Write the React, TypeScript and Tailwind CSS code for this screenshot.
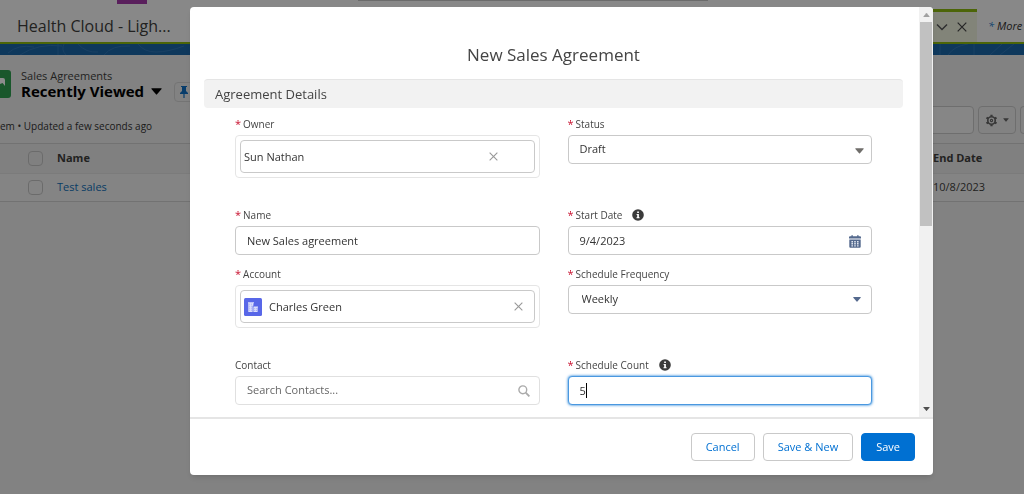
import { useState } from 'react';
import type { ReactNode } from 'react';

const inputClass =
  'h-[29px] w-full rounded border border-[#c9c9c9] bg-white pr-[11px] text-[11px] text-[#333] outline-none';

function Field({ id, label, required, info, children }: {
  id: string;
  label: string;
  required?: boolean;
  info?: boolean;
  children: ReactNode;
}) {
  return (
    <div>
      <div className="flex h-5 items-center pb-[2px] text-[10px] text-[#444]">
        {required && <span className="mr-[2px] text-[11px] text-[#c8102e]">*</span>}
        <label htmlFor={id}>{label}</label>
        {info && (
          <button type="button" aria-label={`Help for ${label}`} className="ml-[10px]">
            <InfoIcon />
          </button>
        )}
      </div>
      {children}
    </div>
  );
}

function Lookup({ id, value, icon, clearClass }: {
  id: string;
  value: string;
  icon?: ReactNode;
  clearClass: string;
}) {
  const [text, setText] = useState(value);

  return (
    <div className="mb-[18px] h-[43px] rounded border border-[#e5e5e5] p-1">
      <div className="flex h-full items-center rounded border border-[#c9c9c9] px-[3px]">
        {icon}
        <input
          id={id}
          value={text}
          onChange={(e) => setText(e.target.value)}
          className="min-w-0 flex-1 bg-transparent pt-[2px] text-[11px] text-[#333] outline-none"
        />
        <button type="button" aria-label="Clear" onClick={() => setText('')} className={clearClass}>
          <CloseIcon className="size-[9px] text-[#999]" />
        </button>
      </div>
    </div>
  );
}

function InfoIcon() {
  return (
    <svg viewBox="0 0 12 12" className="size-3">
      <circle cx="6" cy="6" r="5.8" fill="#3b3b3b" />
      <path d="M5.2 2.4h1.7v1.5H5.2zM4.6 5h2.3v3.2h.7v1H4.5v-1h.7V6h-.6z" fill="#fff" />
    </svg>
  );
}

function CloseIcon({ className }: { className: string }) {
  return (
    <svg viewBox="0 0 10 10" fill="none" stroke="currentColor" strokeWidth="1.2" className={className}>
      <path d="M.7.7l8.6 8.6M9.3.7L.7 9.3" />
    </svg>
  );
}

function Triangle({ className }: { className: string }) {
  return (
    <svg viewBox="0 0 10 6" fill="currentColor" className={className}>
      <path d="M.8 0h8.4q.8 0 .4.7L5.5 5.6q-.5.5-1 0L.4.7Q0 0 .8 0z" />
    </svg>
  );
}

function AccountIcon() {
  return (
    <svg viewBox="0 0 18 18" className="mr-[7px] size-[18px] shrink-0">
      <rect width="18" height="18" rx="1.5" fill="#5867e8" />
      <path d="M4 4.2h6v1h-.6v2.6H8.6V14H4.3V5.2H4z" fill="#dcdffc" />
      <path d="M9.4 8.6H14v1h-.4V14H9.4z" fill="#dcdffc" />
      <path d="M5.3 6.2h.8M7 6.2h.8M5.3 8.2h.8M7 8.2h.8M5.3 10.2h.8M7 10.2h.8M5.3 12.2h.8M7 12.2h.8M10.3 10.7h.9M12 10.7h.8M10.3 12.5h.9M12 12.5h.8" stroke="#8d97f0" strokeWidth=".8" />
    </svg>
  );
}

function CalendarIcon() {
  return (
    <svg viewBox="0 0 12 13" className="h-[13px] w-3">
      <path d="M1 1.3h1.4V.8Q2.4 0 3.1 0t.7.8v.5h4.4V.8Q8.2 0 8.9 0t.7.8v.5H11q1 0 1 1v1.3H0V2.3q0-1 1-1zM.3 4.5h11.4v7.3q0 1-1 1H1.3q-1 0-1-1z" fill="#54698d" />
      <path d="M2.4 6h1.6v1.4H2.4zM5.2 6h1.6v1.4H5.2zM8 6h1.6v1.4H8zM2.4 8.1h1.6v1.4H2.4zM5.2 8.1h1.6v1.4H5.2zM8 8.1h1.6v1.4H8zM2.4 10.2h1.6v1.2H2.4zM5.2 10.2h1.6v1.2H5.2zM8 10.2h1.6v1.2H8z" fill="#dfe5ef" />
    </svg>
  );
}

function SearchIcon() {
  return (
    <svg viewBox="0 0 12 12" fill="none" stroke="#aaa" strokeWidth="1.4" className="size-3">
      <circle cx="4.8" cy="4.8" r="3.9" />
      <path d="M7.7 7.7l3.7 3.7" strokeWidth="1.8" />
    </svg>
  );
}

function GearIcon() {
  return (
    <svg viewBox="0 0 14 14" fill="none" stroke="#666" className="size-[13px]">
      <circle cx="7" cy="7" r="4" strokeWidth="1.8" />
      <circle cx="7" cy="7" r="1.2" strokeWidth="1.2" />
      <path d="M7 .8v2M7 11.2v2M1.6 3.9l1.8 1M10.6 9.1l1.8 1M1.6 10.1l1.8-1M10.6 4.9l1.8-1" strokeWidth="2.4" />
    </svg>
  );
}

function ListView() {
  return (
    <div className="min-h-screen bg-[#ededed]">
      <header className="bg-[#f8f8f8]">
        <div className="flex h-[9px] items-start">
          <div className="ml-[117px] h-1 w-[30px] bg-[#a23aa8]" />
          <div className="ml-[211px] h-px w-[350px] bg-[#c4c4c4]" />
        </div>
        <nav className="flex h-[33px] items-center justify-between">
          <a href="#app" className="pl-[17px] text-[16px] text-[#3e3e3c]">Health Cloud - Ligh...</a>
          <div className="flex h-full items-center">
            <div className="flex h-full w-[140px] items-center justify-end gap-[9px] border-t-[3px] border-[#8bb80f] bg-[#edf0dd] pr-[10px]">
              <button aria-label="Tab actions">
                <svg viewBox="0 0 12 12" fill="none" stroke="#555" strokeWidth="1.5" className="size-3">
                  <path d="M1 3.5l5 5 5-5" />
                </svg>
              </button>
              <button aria-label="Close tab">
                <CloseIcon className="size-[10px] text-[#444]" />
              </button>
            </div>
            <a href="#more" className="flex w-[47px] pt-[2px] pl-[11px] text-[11px] text-[#333] italic">
              <span className="mr-[3px] text-[#1b78c9]">*</span>More
            </a>
          </div>
        </nav>
        <div className="h-[2px] bg-[#8bb80f]" />
        <svg className="block h-[11px] w-full bg-[#1b66a8]" fill="none" stroke="#2f76b5" strokeWidth="1">
          <path d="M8 9q10-9 26-6M20 11q18-12 42-9M58 0v11M64 0q-3 6 2 11M78 0q8 9 20 8M104 11q8-10 26-9M138 0q6 8 18 8t28-6M940 0v11M948 11q6-9 20-11M974 0v11M990 11l12-11M1000 11l14-11" />
        </svg>
      </header>

      <div className="flex h-[50px] items-center pt-[8px]">
        <svg viewBox="0 0 11 28" className="h-7 w-[11px]">
          <path d="M0 0h8q3 0 3 3v22q0 3-3 3H0z" fill="#2e9e4f" />
          <path d="M0 8h3q2 0 2 2v6l-2.4-3L0 14z" fill="#fff" />
        </svg>
        <div className="ml-[10px]">
          <p className="text-[11px] leading-[14px] text-[#3e3e3c]">Sales Agreements</p>
          <h1 className="flex items-center gap-[7px] text-[15px] leading-[17px] font-bold text-black">
            Recently Viewed
            <button aria-label="Select list view">
              <Triangle className="h-[7px] w-[11px]" />
            </button>
          </h1>
        </div>
        <button aria-label="Pin list" className="mt-4 ml-3 flex h-5 w-5 items-center justify-center rounded-sm border border-[#d4d4d4]">
          <svg viewBox="0 0 8 12" fill="#0f6fc4" className="h-3 w-2">
            <path d="M1 0h6v1H6v4l2 2v1H4.6v4H3.4V8H0V7l2-2V1H1z" />
          </svg>
        </button>
      </div>

      <div className="flex h-[38px] items-center justify-between">
        <p className="pt-[4px] text-[10px] text-[#333]">em • Updated a few seconds ago</p>
        <div className="mb-2 flex items-center gap-1">
          <input aria-label="Search this list" className="h-7 w-[180px] rounded border border-[#c9c9c9] bg-[#f4f4f4]" />
          <button aria-label="List view controls" className="flex h-7 w-[38px] items-center justify-center gap-[5px] rounded border border-[#c9c9c9] text-[#666]">
            <GearIcon />
            <Triangle className="h-[4px] w-[6px]" />
          </button>
          <div className="h-7 w-1 rounded-l border-y border-l border-[#c9c9c9]" />
        </div>
      </div>

      <table className="w-full border-y border-[#cfcfcf] text-left text-[11px] text-[#3e3e3c]">
        <thead>
          <tr className="h-[30px] bg-[#e9e9e9]">
            <th className="w-[57px] pl-7">
              <input type="checkbox" aria-label="Select all" className="block size-[15px] appearance-none rounded-sm border border-[#c4c4c4]" />
            </th>
            <th className="font-bold">Name</th>
            <th className="w-[91px] font-bold">End Date</th>
          </tr>
        </thead>
        <tbody>
          <tr className="h-7 border-t border-[#e0e0e0] bg-[#f1f1f1]">
            <td className="pl-7">
              <input type="checkbox" aria-label="Select Test sales" className="block size-[15px] appearance-none rounded-sm border border-[#c4c4c4]" />
            </td>
            <td><a href="#test-sales" className="text-[#0f6fb8]">Test sales</a></td>
            <td>10/8/2023</td>
          </tr>
        </tbody>
      </table>
    </div>
  );
}

function AgreementModal() {
  const [name, setName] = useState('New Sales agreement');
  const [date, setDate] = useState('9/4/2023');
  const [count, setCount] = useState('5');

  return (
    <div className="fixed inset-0 bg-black/45 pt-[7px] pr-[91px] pl-[190px]">
      <form
        role="dialog"
        aria-label="New Sales Agreement"
        onSubmit={(e) => e.preventDefault()}
        className="overflow-hidden rounded bg-white shadow-md"
      >
        <div className="flex">
          <div className="min-w-0 flex-1 pr-4 pb-3 pl-[14px]">
            <h2 className="pt-[34px] pb-[10px] text-center text-[17px] leading-7 text-[#444]">
              New Sales Agreement
            </h2>
            <h3 className="rounded-sm border-t border-[#e5e5e5] bg-[#f2f2f2] pl-[11px] text-[13px] leading-7 text-[#444]">
              Agreement Details
            </h3>
            <div className="grid grid-cols-2 gap-x-7 gap-y-[10px] px-[31px] pt-[7px]">
              <Field id="owner" label="Owner" required>
                <Lookup id="owner" value="Sun Nathan" clearClass="mr-[33px]" />
              </Field>
              <Field id="status" label="Status" required>
                <div className="relative">
                  <select id="status" className={`${inputClass} appearance-none pl-[11px]`}>
                    <option>Draft</option>
                  </select>
                  <Triangle className="pointer-events-none absolute top-[13px] right-2 h-[6px] w-[9px] text-[#706e6b]" />
                </div>
              </Field>
              <Field id="name" label="Name" required>
                <input id="name" value={name} onChange={(e) => setName(e.target.value)} className={`${inputClass} block pl-[11px]`} />
              </Field>
              <Field id="start" label="Start Date" required info>
                <div className="relative">
                  <input id="start" value={date} onChange={(e) => setDate(e.target.value)} className={`${inputClass} block pl-[11px]`} />
                  <button type="button" aria-label="Pick a date" className="absolute top-[9px] right-[11px]">
                    <CalendarIcon />
                  </button>
                </div>
              </Field>
              <Field id="account" label="Account" required>
                <Lookup id="account" value="Charles Green" icon={<AccountIcon />} clearClass="mr-[8px]" />
              </Field>
              <Field id="frequency" label="Schedule Frequency" required>
                <div className="relative">
                  <select id="frequency" className={`${inputClass} appearance-none pl-[13px]`}>
                    <option>Weekly</option>
                  </select>
                  <Triangle className="pointer-events-none absolute top-3 right-[11px] h-[5px] w-2 text-[#54698d]" />
                </div>
              </Field>
              <Field id="contact" label="Contact">
                <div className="flex h-[29px] items-center rounded border border-[#e0e0e0] pr-[9px] pl-[11px]">
                  <input id="contact" placeholder="Search Contacts..." className="min-w-0 flex-1 text-[11px] outline-none placeholder:text-[#666]" />
                  <SearchIcon />
                </div>
              </Field>
              <Field id="count" label="Schedule Count" required info>
                <div className="relative">
                  <input
                    id="count"
                    value={count}
                    onChange={(e) => setCount(e.target.value)}
                    className="block h-[29px] w-full rounded border border-[#4a98e0] bg-white px-[11px] text-[11px] text-[#333] shadow-[0_0_3px_#0070d2] outline-none"
                  />
                  <span className="absolute top-[7px] left-[18px] h-[15px] w-px bg-black" />
                </div>
              </Field>
            </div>
          </div>

          <div className="flex w-[14px] flex-col items-center bg-[#f1f1f1] text-[#505050]">
            <Triangle className="mt-[6px] mb-[5px] h-[4px] w-[7px] rotate-180 text-[#a0a0a0]" />
            <div className="h-[204px] w-3 bg-[#c1c1c1]" />
            <Triangle className="mt-auto mb-[6px] h-[4px] w-[7px]" />
          </div>
        </div>

        <footer className="flex justify-end gap-2 border-t-2 border-[#e5e5e5] px-[18px] pt-[14px] pb-[14px] text-[11px]">
          <button type="button" className="h-7 rounded border border-[#c9c9c9] px-[14px] text-[#0070d2]">Cancel</button>
          <button type="button" className="h-7 rounded border border-[#c9c9c9] px-[14px] text-[#0070d2]">Save &amp; New</button>
          <button type="submit" className="h-7 rounded border border-[#0070d2] bg-[#0070d2] px-[14px] text-white">Save</button>
        </footer>
      </form>
    </div>
  );
}

export default function App() {
  return (
    <div className="font-['Open_Sans','Noto_Sans',sans-serif]">
      <ListView />
      <AgreementModal />
    </div>
  );
}
